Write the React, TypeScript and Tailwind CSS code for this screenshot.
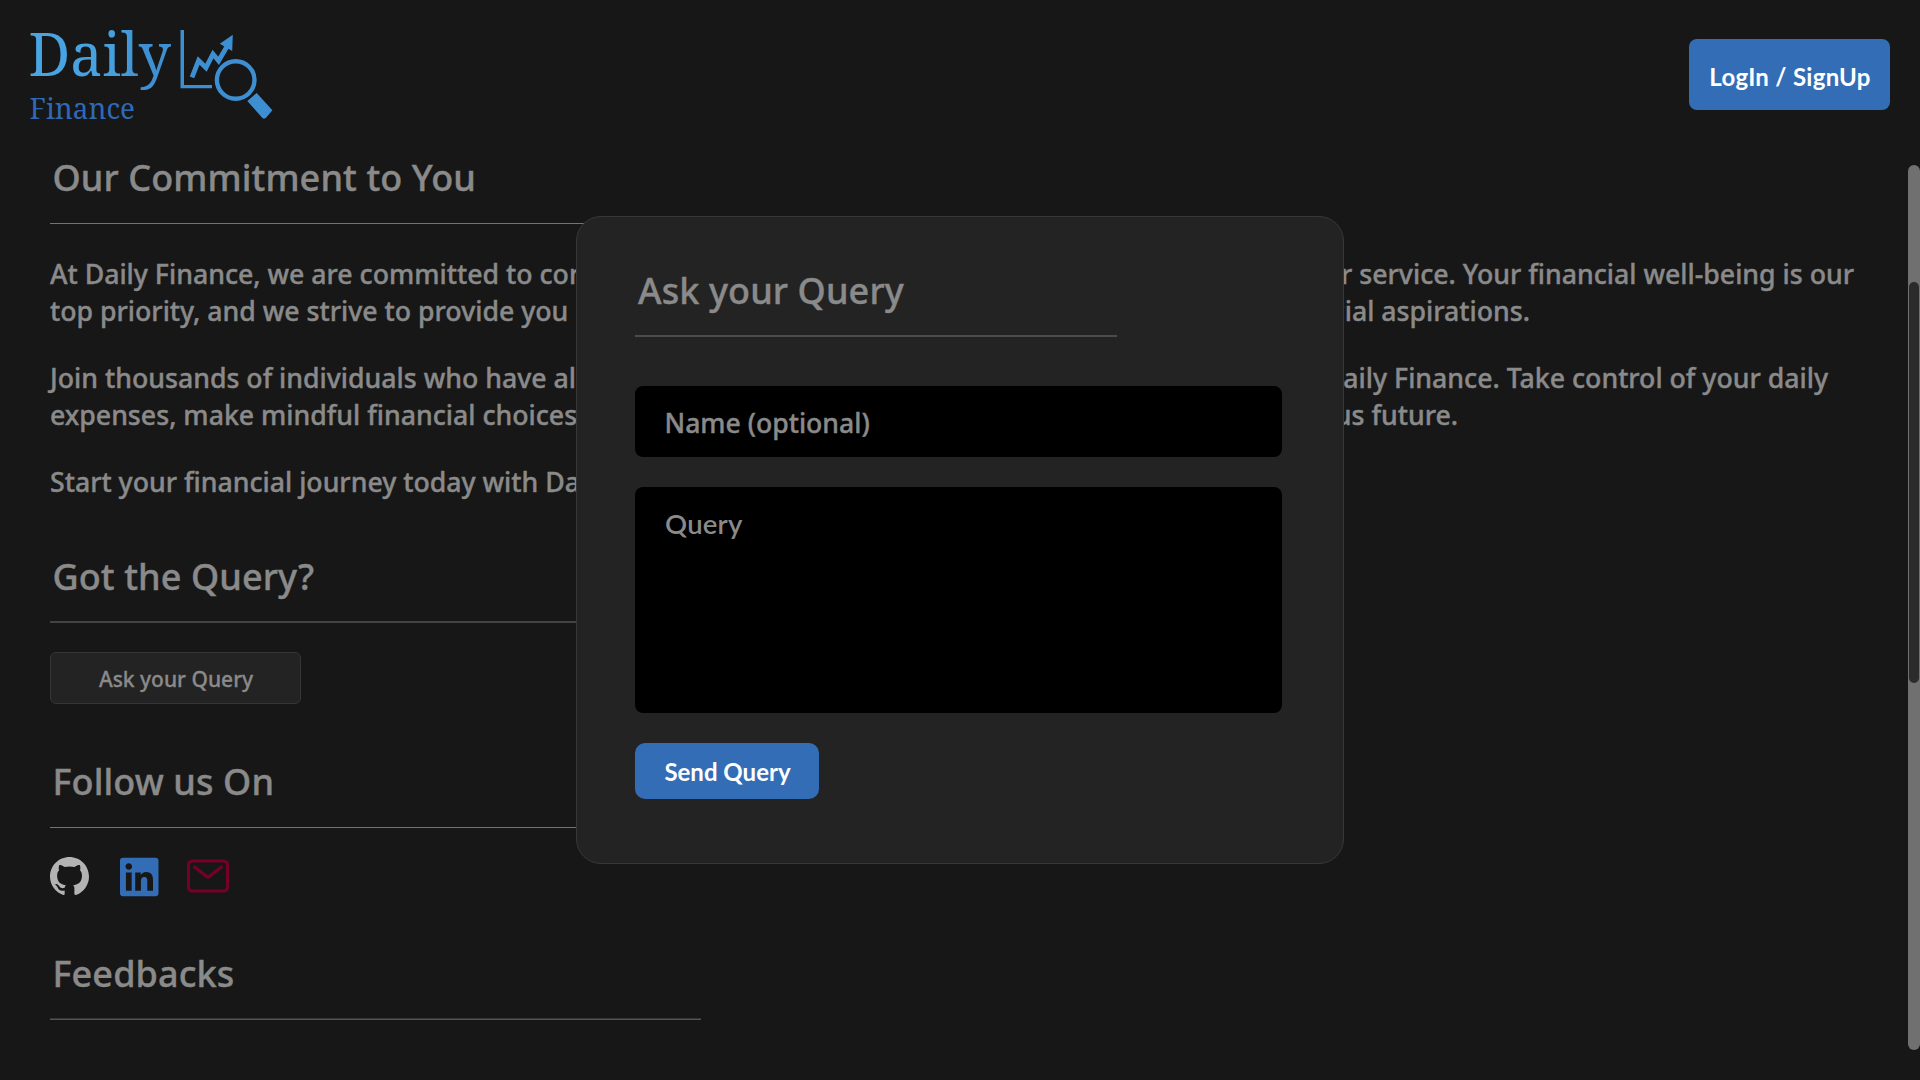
import React from "react";
import { BsGithub } from "react-icons/bs";
import { FaLinkedin } from "react-icons/fa";
import { IoMailOutline } from "react-icons/io5";

function Logo() {
  return (
    <svg width="260" height="110" viewBox="20 20 260 110" className="block overflow-visible font-normal [-webkit-text-stroke:0]">
      <defs>
        <linearGradient id="daily" gradientUnits="userSpaceOnUse" x1="30" y1="0" x2="171" y2="0">
          <stop offset="0" stopColor="#49a6e3" />
          <stop offset="0.66" stopColor="#469fdd" />
          <stop offset="0.76" stopColor="#3f90d3" />
          <stop offset="1" stopColor="#3f90d3" />
        </linearGradient>
      </defs>
      <text x="28.5" y="76" fontFamily='"Noto Serif", serif' fontSize="61" fill="url(#daily)" textLength="142.5" lengthAdjust="spacingAndGlyphs">Daily</text>
      <text x="29.5" y="118.6" fontFamily='"Noto Serif", serif' fontSize="29" fill="#2f69b6" textLength="105.5" lengthAdjust="spacingAndGlyphs">Finance</text>
      <g fill="#3d8fd2">
        <path d="M180.5 30H184V85H212V88.2H180.5Z" />
        <path d="M232.8 34.8L219.8 43.7L232.2 51Z" />
        <path d="M247.3 101L256.7 93L272.4 110.2L265.8 118Q264 119.2 262.4 118Z" />
      </g>
      <g fill="none" stroke="#3d8fd2">
        <path d="M192 77.3L198.6 60.5L206 67.7L213 54L218.6 60.8L227 46.5" strokeWidth="4.8" />
        <circle cx="235.7" cy="80" r="18.8" strokeWidth="4.4" />
      </g>
    </svg>
  );
}

function Heading({ children, rule }: { children: React.ReactNode; rule: React.ReactNode }) {
  return (
    <div>
      <h2 className="h-[70px] pl-[2.5px] pt-px text-[36px] leading-[48px] tracking-[0.1px]">{children}</h2>
      {rule}
    </div>
  );
}

function Line({ left, right, width }: { left: string; right?: string; width: string }) {
  return (
    <div className={"flex justify-between whitespace-nowrap " + width}>
      <span>{left}</span>
      {right && <span>{right}</span>}
    </div>
  );
}

function QueryDialog() {
  return (
    <section className="absolute left-[576px] top-[216px] flex h-[648px] w-[768px] flex-col rounded-[25px] border border-[#383838] bg-[#232323] pl-[58px] pt-[49px]">
      <h2 className="h-[69px] pl-[3px] pt-px text-[36px] leading-[48px] tracking-[0.1px]">Ask your Query</h2>
      <div className="h-[2px] w-[482px] bg-[#4c4c4c]" />
      <div className="mt-[49px] flex h-[71px] w-[647px] items-center rounded-[8px] bg-black pl-[29.5px] pt-[4px] text-[26.6px]">Name (optional)</div>
      <div className="mt-[30px] h-[226px] w-[647px] rounded-[8px] bg-black pl-[30px] pt-[18px] font-[Lato,sans-serif] text-[27.5px] font-semibold leading-[37px] tracking-[0.2px] [-webkit-text-stroke:0]">Query</div>
      <button className="mt-[30px] flex h-[56px] w-[184px] items-center justify-center rounded-[10px] bg-[#336db6] pl-px pt-[2px] font-[Lato,sans-serif] text-[24px] font-bold text-white [-webkit-text-stroke:0]">Send Query</button>
    </section>
  );
}

export default function App() {
  return (
    <div className="relative flex h-[1080px] w-[1920px] flex-col overflow-hidden bg-[#171717] font-['Noto_Sans',sans-serif] font-medium text-[#8a8a8a] [-webkit-text-stroke:0.4px]">
      <header className="flex h-[153px] shrink-0 items-start justify-between pl-[20px] pr-[30px]">
        <div className="pt-[20px]">
          <Logo />
        </div>
        <button className="mt-[39px] flex h-[71px] w-[201px] items-center justify-center rounded-[8px] bg-[#336db6] pl-px pt-[4px] font-[Lato,sans-serif] text-[24px] font-bold tracking-[0.3px] text-white [-webkit-text-stroke:0]">LogIn / SignUp</button>
      </header>

      <div className="flex min-h-0 flex-1">
        <main className="flex-1 pl-[50px]">
          <Heading rule={<div className="h-px w-[651px] bg-[#737373]" />}>Our Commitment to You</Heading>
          <div className="mt-[31px] flex flex-col gap-[30px] text-[26.7px] leading-[37px]">
            <div>
              <Line width="w-[1804px]" left="At Daily Finance, we are committed to continuously" right="improving our service. Your financial well-being is our" />
              <Line width="w-[1480px]" left="top priority, and we strive to provide you" right="with the tools for your financial aspirations." />
            </div>
            <div>
              <Line width="w-[1778px]" left="Join thousands of individuals who have already" right="with Daily Finance. Take control of your daily" />
              <Line width="w-[1408px]" left="expenses, make mindful financial choices, and build" right="a secure and prosperous future." />
            </div>
            <Line width="w-[1408px]" left="Start your financial journey today with Daily Finance!" />
          </div>
          <div className="mt-[52px]">
            <Heading rule={<div className="-mt-px h-[2px] w-[651px] bg-[#434343]" />}>Got the Query?</Heading>
          </div>
          <button className="mt-[29px] flex h-[52px] w-[251px] items-center justify-center rounded-[6px] border border-[#363636] bg-[#232323] pl-px pt-[3px] text-[21px] [-webkit-text-stroke:0.3px]">Ask your Query</button>
          <div className="mt-[53px]">
            <Heading rule={<div className="h-px w-[651px] bg-[#737373]" />}>Follow us On</Heading>
          </div>
          <div className="mt-[24px] flex h-[49px] items-center">
            <BsGithub className="size-[39px] text-[#b3b3b3]" />
            <FaLinkedin className="ml-[31px] h-[44px] w-[38.5px] text-[#336db6]" />
            <IoMailOutline className="-mt-px ml-[25.5px] size-[48px] text-[#76002a]" />
          </div>
          <div className="mt-[48px]">
            <Heading rule={<div className="-mt-px h-[2px] w-[651px] border-t border-[#363636] bg-[#535353]" />}>Feedbacks</Heading>
          </div>
        </main>
        <div className="mt-[12px] h-[885px] w-[12px] rounded-full bg-[#707070] px-px pt-[117px]">
          <div className="h-[401px] rounded-full bg-[#2b2b2b]" />
        </div>
      </div>

      <QueryDialog />
    </div>
  );
}
